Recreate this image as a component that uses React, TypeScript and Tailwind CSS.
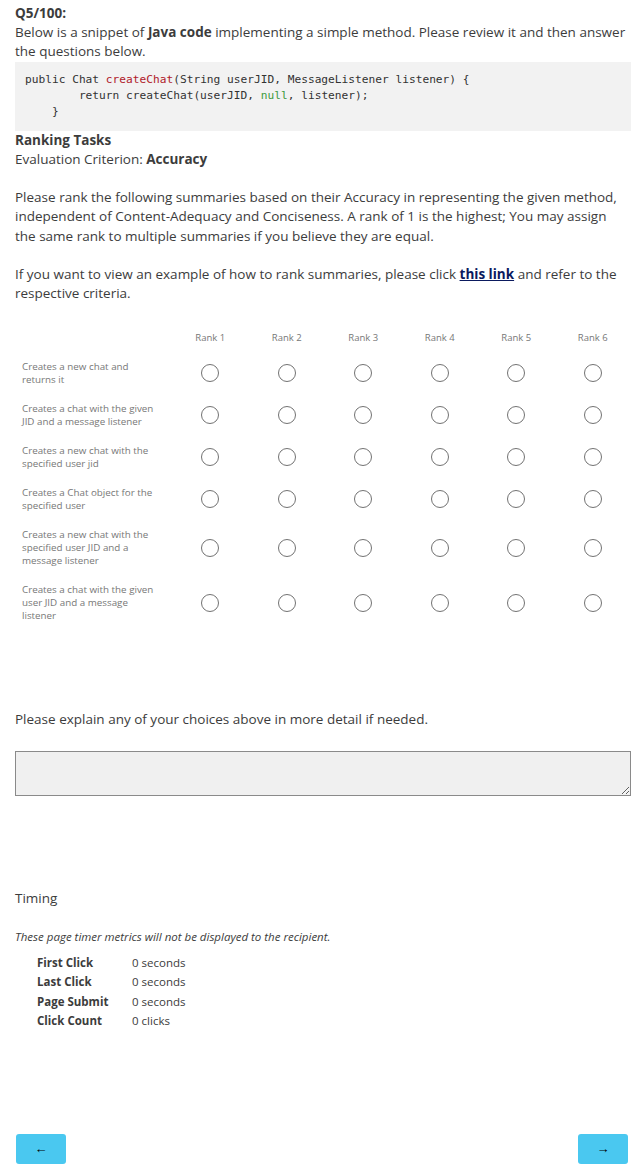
import React from "react";

const ranks = ["Rank 1", "Rank 2", "Rank 3", "Rank 4", "Rank 5", "Rank 6"];

const summaries: string[][] = [
  ["Creates a new chat and", "returns it"],
  ["Creates a chat with the given", "JID and a message listener"],
  ["Creates a new chat with the", "specified user jid"],
  ["Creates a Chat object for the", "specified user"],
  ["Creates a new chat with the", "specified user JID and a", "message listener"],
  ["Creates a chat with the given", "user JID and a message", "listener"],
];

const timing = [
  ["First Click", "0 seconds"],
  ["Last Click", "0 seconds"],
  ["Page Submit", "0 seconds"],
  ["Click Count", "0 clicks"],
];

function Radio() {
  return (
    <span className="block w-[18px] h-[18px] rounded-full border-[1.5px] border-[#727272] bg-white" />
  );
}

export default function App() {
  return (
    <div className="bg-white text-[#3c3c3c] font-['Open_Sans',sans-serif] text-[13.5px] leading-[19.2px] pl-[15px] pr-[12px] pt-[4px] pb-[12px] min-h-[1175px]">
      <div className="font-bold">Q5/100:</div>
      <div>
        Below is a snippet of <b>Java code</b> implementing a simple method. Please review it and then answer
        <br />
        the questions below.
      </div>

      <div className="bg-[#f2f2f2] pl-[10px] pt-[10px] pb-[11px] font-['DejaVu_Sans_Mono',monospace] text-[11.2px] leading-[16px] text-[#333] whitespace-pre">
        <div>
          public Chat <span className="text-[#b0202a]">createChat</span>(String userJID, MessageListener listener) {"{"}
        </div>
        <div>
          {"        return createChat(userJID, "}
          <span className="text-[#3d9a3d]">null</span>, listener);
        </div>
        <div>{"    }"}</div>
      </div>

      <div className="font-bold">Ranking Tasks</div>
      <div>
        Evaluation Criterion: <b>Accuracy</b>
      </div>
      <br />
      <div>
        Please rank the following summaries based on their Accuracy in representing the given method,
        <br />
        independent of Content-Adequacy and Conciseness. A rank of 1 is the highest; You may assign
        <br />
        the same rank to multiple summaries if you believe they are equal.
      </div>
      <br />
      <div>
        If you want to view an example of how to rank summaries, please click{" "}
        <a href="#" className="font-bold text-[#0b1a5e] underline">
          this link
        </a>{" "}
        and refer to the
        <br />
        respective criteria.
      </div>

      <div className="mt-[28px] text-[9.5px] leading-[13px] text-[#777]">
        <div className="grid grid-cols-[157px_repeat(6,1fr)] pb-[8px]">
          <div />
          {ranks.map((r) => (
            <div key={r} className="text-center">
              {r}
            </div>
          ))}
        </div>
        {summaries.map((lines, i) => (
          <div key={i} className="grid grid-cols-[157px_repeat(6,1fr)] items-center py-[8px]">
            <div className="pl-[7px] text-[9.8px]">
              {lines.map((l, j) => (
                <div key={j} className="whitespace-nowrap">
                  {l}
                </div>
              ))}
            </div>
            {ranks.map((r) => (
              <div key={r} className="flex justify-center">
                <Radio />
              </div>
            ))}
          </div>
        ))}
      </div>

      <div className="mt-[80px]">Please explain any of your choices above in more detail if needed.</div>
      <textarea className="block mt-[21px] w-full h-[45px] bg-[#f0f0f0] border border-[#8a8a8a] resize-y" />

      <div className="mt-[93px]">Timing</div>
      <div className="mt-[21px] italic text-[11.5px] leading-[16px]">
        These page timer metrics will not be displayed to the recipient.
      </div>
      <div className="mt-[8px] pl-[22px] text-[11.5px] leading-[19.5px]">
        {timing.map(([k, v]) => (
          <div key={k} className="flex">
            <div className="w-[95px] font-bold">{k}</div>
            <div>{v}</div>
          </div>
        ))}
      </div>

      <div className="mt-[103px] flex justify-between">
        <button className="ml-[1px] w-[50px] h-[30px] rounded-[3px] bg-[#4ac8f0] text-black text-[13px] font-bold">←</button>
        <button className="mr-[3px] w-[50px] h-[30px] rounded-[3px] bg-[#4ac8f0] text-black text-[13px] font-bold">→</button>
      </div>
    </div>
  );
}
